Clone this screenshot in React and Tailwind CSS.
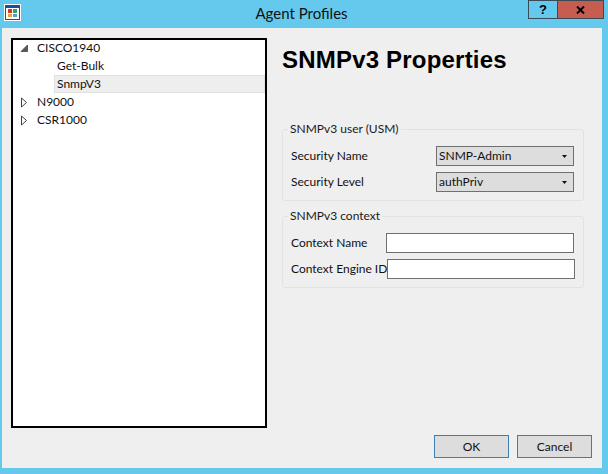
const ui = { fontFamily: 'Lato, Roboto, sans-serif' };

function Expander({ open }) {
  return open ? (
    <svg width="9" height="9" viewBox="0 0 9 9" className="shrink-0">
      <path d="M1 7.5H7.5V1Z" fill="#595959" stroke="#595959" />
    </svg>
  ) : (
    <svg width="9" height="11" viewBox="0 0 9 11" className="shrink-0">
      <path d="M1.5 1V10L6.5 5.5Z" fill="#fff" stroke="#404040" />
    </svg>
  );
}

function TreeRow({ label, open, selected, indent }) {
  if (indent) {
    return (
      <div className={`h-[18px] ml-[41px] pl-[2px] pb-[1px] flex items-center border ${selected ? "bg-[#eeeeee] border-[#e0e0e0]" : "border-transparent"}`}>
        {label}
      </div>
    );
  }
  return (
    <div className="h-[18px] flex items-center">
      <div className="w-[24px] pl-[7px] flex items-center"><Expander open={open} /></div>
      <span className="pb-[1px]">{label}</span>
    </div>
  );
}

function Group({ title, children }) {
  return (
    <div className="relative border border-[#dfe3e8] rounded-[3px] h-[72px] pl-[8px] pr-[9px] flex flex-col gap-[6px] pt-[16px]">
      <span className="absolute left-[5px] -top-[8px] px-[2px] bg-[#efefef] text-[12px] leading-[14px] text-[#1a1a1a]">{title}</span>
      {children}
    </div>
  );
}

function Combo({ value }) {
  return (
    <div className="w-[138px] h-[20px] border border-[#707070] bg-[#dddddd] flex items-center justify-between pl-[2px] pr-[6px] text-[12px]">
      <span>{value}</span>
      <svg width="5" height="3" viewBox="0 0 5 3"><path d="M0 0H5L2.5 3Z" fill="#111" /></svg>
    </div>
  );
}

function Field({ label, children }) {
  return (
    <div className="h-[20px] flex items-center justify-between text-[12px] text-[#111] whitespace-nowrap">
      <span>{label}</span>
      {children}
    </div>
  );
}

function TextBox() {
  return <div className="w-[188px] h-[20px] border border-[#707070] bg-white shrink-0" />;
}

function Button({ children, primary }) {
  return (
    <div className={`w-[75px] h-[23px] flex items-center justify-center bg-[#dddddd] border text-[12px] ${primary ? "border-[#3c7fb1]" : "border-[#707070]"}`}>
      {children}
    </div>
  );
}

export default function App() {
  return (
    <div className="w-[608px] h-[474px] bg-[#65c9ee] flex flex-col overflow-hidden text-[#111]" style={ui}>
      <div className="h-[28px] shrink-0 flex items-start">
        <div className="ml-[4px] mt-[4px] w-[17px] h-[17px] bg-white flex items-center justify-center">
          <svg width="15" height="15" viewBox="0 0 15 15">
            <rect x="0.5" y="0.5" width="14" height="14" fill="#fff" stroke="#1d4e9e" />
            <rect x="1" y="1" width="13" height="2" fill="#1d4e9e" />
            <rect x="3" y="4" width="4" height="4" fill="#d9372c" />
            <rect x="8" y="4" width="4" height="4" fill="#3aa655" />
            <rect x="3" y="9" width="4" height="3" fill="#e8a33d" />
            <rect x="8" y="9" width="4" height="3" fill="#5b9bd5" />
          </svg>
        </div>
        <div className="flex-1 text-center text-[15px] leading-[26px] text-[#111] pl-[54px]">Agent Profiles</div>
        <div className="flex h-[19px] mr-[4px]">
          <div className="w-[30px] border border-[#3a4a55] flex items-center justify-center font-bold text-[13px] text-black" style={{ fontFamily: '"Liberation Sans", sans-serif' }}>?</div>
          <div className="w-[46px] border border-l-0 border-[#3a4a55] bg-[#c75c50] flex items-center justify-center">
            <svg width="9" height="8" viewBox="0 0 9 8"><path d="M1 0.5L8 7.5M8 0.5L1 7.5" stroke="#000" strokeWidth="2" /></svg>
          </div>
        </div>
      </div>

      <div className="ml-[2px] mr-[6px] h-[440px] bg-[#efefef] flex flex-col">
        <div className="flex h-[400px] pt-[10px] pl-[9px]">
          <div className="w-[256px] h-[390px] border-2 border-black bg-white text-[12px]">
            <div className="-mt-[1px]">
              <TreeRow label="CISCO1940" open />
              <TreeRow label="Get-Bulk" indent />
              <TreeRow label="SnmpV3" indent selected />
              <TreeRow label="N9000" />
              <TreeRow label="CSR1000" />
            </div>
          </div>
          <div className="w-[302px] ml-[15px]">
            <h1 className="text-[24px] leading-[28px] font-bold text-black mt-[8px] tracking-[0.2px]" style={{ fontFamily: '"Liberation Sans", sans-serif' }}>
              SNMPv3 Properties
            </h1>
            <div className="mt-[55px] flex flex-col gap-[15px]">
              <Group title="SNMPv3 user (USM)">
                <Field label="Security Name"><Combo value="SNMP-Admin" /></Field>
                <Field label="Security Level"><Combo value="authPriv" /></Field>
              </Group>
              <Group title="SNMPv3 context">
                <Field label="Context Name"><TextBox /></Field>
                <Field label="Context Engine ID"><TextBox /></Field>
              </Group>
            </div>
          </div>
        </div>
        <div className="flex justify-end gap-[8px] pr-[10px] pt-[7px]">
          <Button primary>OK</Button>
          <Button>Cancel</Button>
        </div>
      </div>
    </div>
  );
}
